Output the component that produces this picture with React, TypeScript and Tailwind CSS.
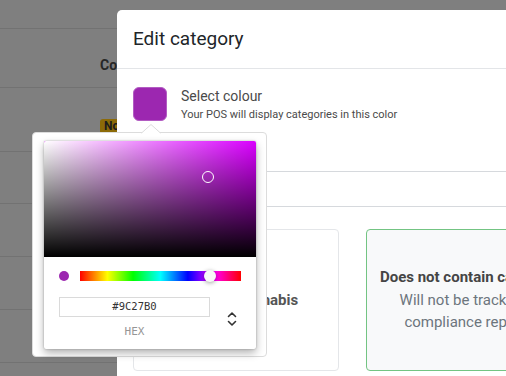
export default function App() {
  return (
    <div className="relative w-[506px] h-[376px] overflow-hidden bg-[#7f7f7f] font-['Roboto',sans-serif]">
      {/* background page (dimmed) */}
      <div className="flex flex-col">
        <div className="h-[29px] border-b border-[#727272]" />
        <div className="h-[59px] border-b border-[#727272] pl-[100px] pt-[29px]">
          <div className="text-[14px] leading-[14px] font-bold text-[#272727] whitespace-nowrap">Compliance</div>
        </div>
        <div className="h-[64px] border-b border-[#727272] pl-[100px] pt-[25px]">
          <span className="inline-block rounded-[3px] bg-[#8c6a08] px-[4px] text-[12px] leading-[15px] font-bold text-[#1c1c1c]">Non</span>
        </div>
        <div className="h-[52px] border-b border-[#727272]" />
        <div className="h-[53px] border-b border-[#727272]" />
        <div className="h-[53px] border-b border-[#727272]" />
        <div className="h-[53px] border-b border-[#727272]" />
      </div>

      {/* modal */}
      <div className="absolute left-[117px] top-[10px] w-[480px] h-[420px] bg-white rounded-[5px]">
        <div className="h-[59px] border-b border-[#e3e5e8] px-[16px] flex items-center">
          <div className="text-[19px] text-[#212529]">Edit category</div>
        </div>
        <div className="px-[16px] pt-[18px]">
          <div className="flex items-start">
            <div className="w-[34px] h-[34px] rounded-[6px] bg-[#9C27B0] border border-[#b25cc2]" />
            <div className="ml-[14px] pt-[1px]">
              <div className="text-[14px] leading-[16px] text-[#4a4a4a]">Select colour</div>
              <div className="mt-[4px] text-[11px] leading-[13px] text-[#4a4a4a] whitespace-nowrap">Your POS will display categories in this color</div>
            </div>
          </div>
          <div className="mt-[50px] h-[36px] border-y border-[#d6d9dd]" />
          <div className="mt-[22px] flex gap-[27px]">
            <div className="w-[206px] h-[142px] shrink-0 rounded-[4px] border border-[#e4e6e9] flex items-center justify-center">
              <div className="text-[15px] font-bold text-[#555]">Contains cannabis</div>
            </div>
            <div className="w-[206px] h-[142px] shrink-0 rounded-[4px] border border-[#73c483] bg-[#f8f9fa] flex flex-col items-center justify-center text-center text-[15px] leading-[22.5px] whitespace-nowrap">
              <div className="font-bold text-[#454545]">Does not contain cannabis</div>
              <div className="text-[#6c757d]">Will not be tracked in</div>
              <div className="text-[#6c757d]">compliance reports</div>
            </div>
          </div>
        </div>
      </div>

      {/* colour picker popover */}
      <div className="absolute left-[32px] top-[132px] w-[235px] h-[225px] bg-white border border-[#dcdcdc] rounded-[4px] pt-[8px] pl-[11px]">
        <svg className="absolute left-[108px] top-[-9px]" width="20" height="10" viewBox="0 0 20 10">
          <path d="M0 9.5 L10 0.5 L20 9.5" fill="white" stroke="#dcdcdc" strokeWidth="1" />
          <rect x="0" y="9.5" width="20" height="1" fill="white" />
        </svg>
        <div className="w-[212px] h-[208px] rounded-[2px] bg-white shadow-[0_0_2px_rgba(0,0,0,0.3),0_4px_8px_rgba(0,0,0,0.3)]">
          <div className="relative h-[116px] rounded-t-[2px] overflow-hidden bg-[#DA00FF]">
            <div className="absolute inset-0 bg-[linear-gradient(to_right,#fff,rgba(255,255,255,0))]" />
            <div className="absolute inset-0 bg-[linear-gradient(to_top,#000,rgba(0,0,0,0))]" />
            <div className="absolute left-[158px] top-[30px] w-[12px] h-[12px] rounded-full border-[1.5px] border-white" />
          </div>
          <div className="px-[15px] pt-[14px]">
            <div className="flex items-center h-[10px]">
              <div className="w-[10px] h-[10px] rounded-full bg-[#9C27B0]" />
              <div className="relative ml-[11px] flex-1 h-[10px] bg-[linear-gradient(to_right,#f00_0%,#ff0_17%,#0f0_33%,#0ff_50%,#00f_67%,#f0f_83%,#f00_100%)]">
                <div className="absolute left-[124px] top-[-1px] w-[12px] h-[12px] rounded-full bg-[#f8f8f8] shadow-[0_1px_4px_rgba(0,0,0,0.37)]" />
              </div>
            </div>
            <div className="mt-[16px] flex font-['DejaVu_Sans_Mono',monospace]">
              <div className="flex-1">
                <div className="h-[20px] flex items-center justify-center text-[10.5px] text-[#333] shadow-[inset_0_0_0_1px_#dadada]">#9C27B0</div>
                <div className="mt-[9px] text-center text-[11px] leading-[12px] text-[#969696]">HEX</div>
              </div>
              <div className="w-[31px] flex justify-end pr-[4px] pt-[14px]">
                <svg width="10" height="16" viewBox="0 0 10 16" fill="none" stroke="#333" strokeWidth="1.6" strokeLinecap="round" strokeLinejoin="round">
                  <path d="M1.5 5.5 L5 2 L8.5 5.5" />
                  <path d="M1.5 10.5 L5 14 L8.5 10.5" />
                </svg>
              </div>
            </div>
          </div>
        </div>
      </div>
    </div>
  );
}
